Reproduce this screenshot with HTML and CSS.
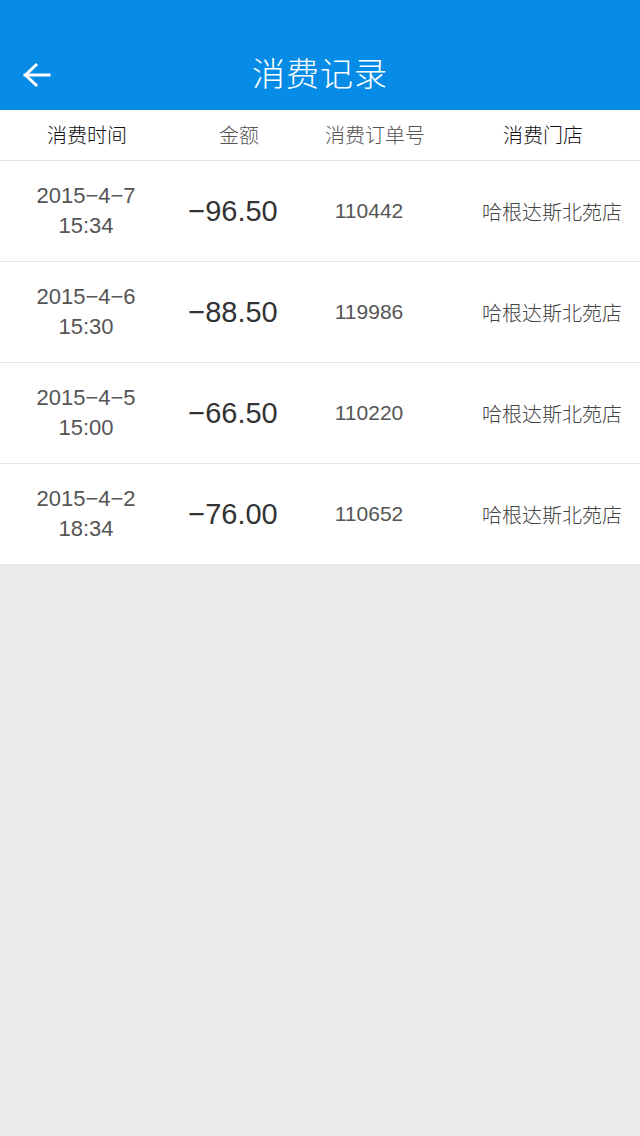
FILE: index.html
```html
<!DOCTYPE html>
<html lang="zh">
<head>
<meta charset="utf-8">
<title>消费记录</title>
<link rel="stylesheet" href="styles.css">
</head>
<body>
<header class="topbar">
  <a class="back" aria-label="返回">
    <svg width="30" height="26" viewBox="0 0 30 26" fill="none" stroke="#fff" stroke-width="3" stroke-linecap="square">
      <path d="M3 13 H27"/>
      <path d="M14 3 L3.5 13 L14 23"/>
    </svg>
  </a>
  <h1 class="title">消费记录</h1>
</header>
<div class="thead">
  <div class="th dark">消费时间</div>
  <div class="th">金额</div>
  <div class="th">消费订单号</div>
  <div class="th dark">消费门店</div>
</div>
<div class="list">
  <div class="row">
    <div class="date">2015−4−7<br>15:34</div>
    <div class="amount">−96.50</div>
    <div class="order">110442</div>
    <div class="store">哈根达斯北苑店</div>
  </div>
  <div class="row">
    <div class="date">2015−4−6<br>15:30</div>
    <div class="amount">−88.50</div>
    <div class="order">119986</div>
    <div class="store">哈根达斯北苑店</div>
  </div>
  <div class="row">
    <div class="date">2015−4−5<br>15:00</div>
    <div class="amount">−66.50</div>
    <div class="order">110220</div>
    <div class="store">哈根达斯北苑店</div>
  </div>
  <div class="row">
    <div class="date">2015−4−2<br>18:34</div>
    <div class="amount">−76.00</div>
    <div class="order">110652</div>
    <div class="store">哈根达斯北苑店</div>
  </div>
</div>
</body>
</html>
```
FILE: styles.css
```css
* { box-sizing: border-box; }
html, body { margin: 0; padding: 0; }
body {
  width: 640px;
  min-height: 1136px;
  background: #ebebeb;
  font-family: "Liberation Sans", "Noto Sans CJK SC", sans-serif;
  color: #333;
}
.topbar {
  position: relative;
  height: 110px;
  background: #068be6;
  display: flex;
  align-items: flex-end;
  justify-content: center;
  padding-bottom: 16px;
}
.back {
  position: absolute;
  left: 22px;
  top: 62px;
  display: block;
  width: 30px;
  height: 26px;
}
.back svg { display: block; }
.title {
  margin: 0;
  font-family: "Noto Sans CJK SC", sans-serif;
  font-weight: 300;
  font-size: 33px;
  line-height: 44px;
  color: #fff;
  letter-spacing: 1px;
}
.thead {
  display: grid;
  grid-template-columns: 174px 130px 142px 194px;
  height: 51px;
  background: #fff;
  border-bottom: 1px solid #e4e4e4;
  align-items: center;
}
.th {
  text-align: center;
  font-family: "Noto Sans CJK SC", sans-serif;
  font-weight: 300;
  font-size: 20px;
  color: #555;
  padding-bottom: 2px;
}
.th.dark { color: #111; }
.list { background: #fff; }
.row {
  display: grid;
  grid-template-columns: 174px 118px 154px 194px;
  height: 101px;
  align-items: center;
  border-bottom: 1px solid #e6e6e6;
}
.row:last-child { border-bottom: none; height: 100px; }
.date {
  text-align: center;
  font-size: 22px;
  line-height: 30px;
  color: #555;
  padding-right: 2px;
}
.amount {
  text-align: center;
  font-size: 29px;
  color: #333;
}
.order {
  text-align: center;
  font-size: 21px;
  color: #555;
}
.store {
  text-align: right;
  padding-right: 18px;
  font-family: "Noto Sans CJK SC", sans-serif;
  font-weight: 300;
  font-size: 20px;
  color: #444;
}
```
